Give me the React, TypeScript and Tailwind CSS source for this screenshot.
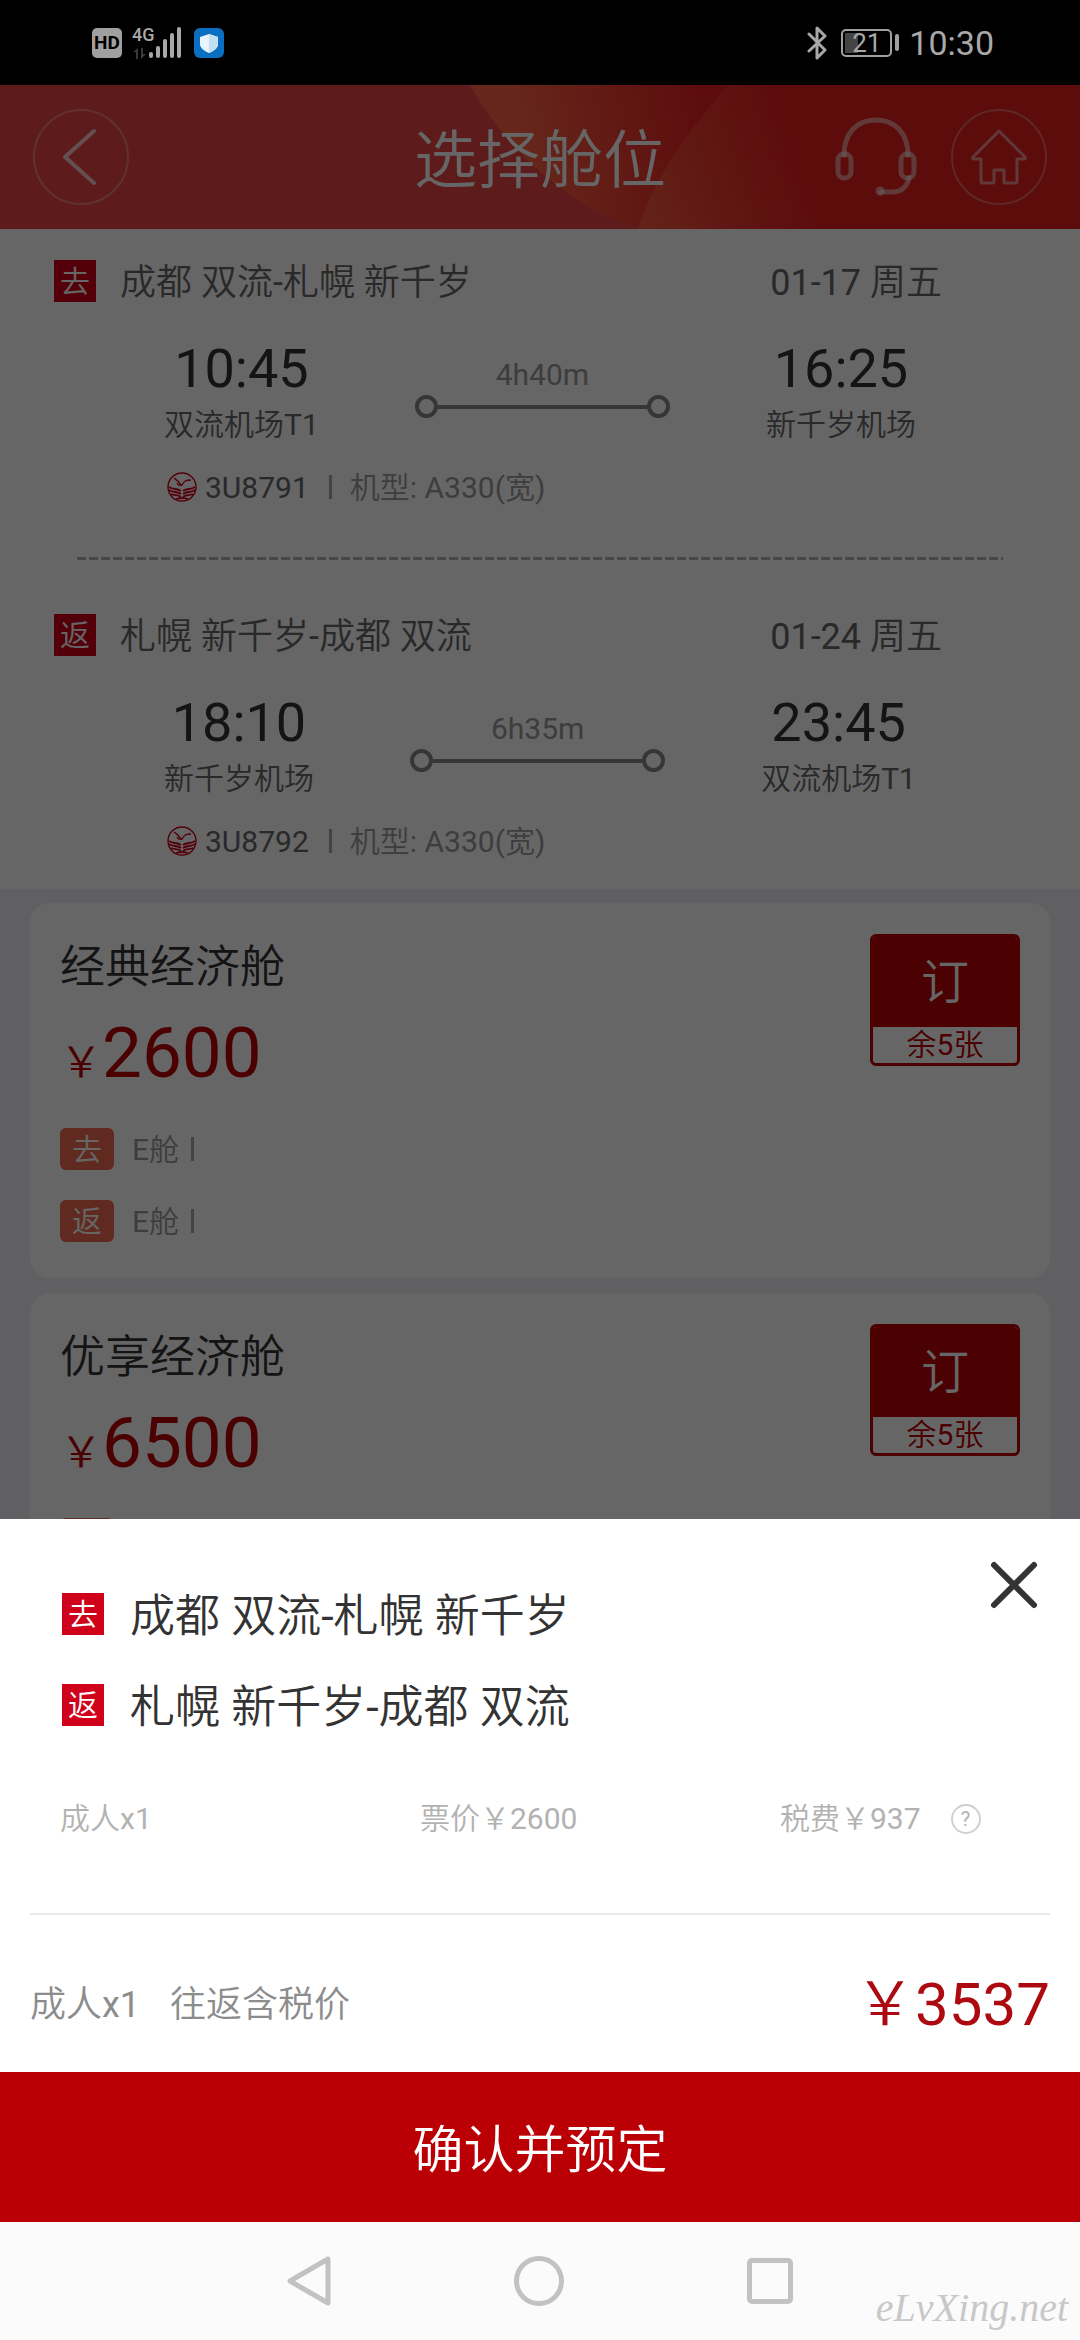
import type { ReactNode } from 'react';

type Leg = {
  tag: string;
  route: string;
  date: string;
  depart: string;
  departAirport: string;
  duration: string;
  arrive: string;
  arriveAirport: string;
  flight: string;
  plane: string;
};

const legs: Leg[] = [
  {
    tag: '去',
    route: '成都 双流-札幌 新千岁',
    date: '01-17 周五',
    depart: '10:45',
    departAirport: '双流机场T1',
    duration: '4h40m',
    arrive: '16:25',
    arriveAirport: '新千岁机场',
    flight: '3U8791',
    plane: 'A330(宽)',
  },
  {
    tag: '返',
    route: '札幌 新千岁-成都 双流',
    date: '01-24 周五',
    depart: '18:10',
    departAirport: '新千岁机场',
    duration: '6h35m',
    arrive: '23:45',
    arriveAirport: '双流机场T1',
    flight: '3U8792',
    plane: 'A330(宽)',
  },
];

const cabins = [
  { name: '经典经济舱', price: 2600, left: 5 },
  { name: '优享经济舱', price: 6500, left: 5 },
];

function StatusBar() {
  return (
    <div className="relative z-20 flex h-[85px] items-center justify-between bg-black pl-[92px] pr-[86px] text-[#a8a8a8]">
      <div className="flex items-center">
        <span className="flex h-[30px] w-[30px] items-center justify-center rounded-[5px] bg-[#a0a0a0] text-[19px] font-bold leading-none text-black">
          HD
        </span>
        <div className="ml-[10px] flex h-[34px] w-5 flex-col justify-between">
          <span className="text-lg font-medium leading-[18px]">4G</span>
          <svg width="15" height="12" viewBox="0 0 15 12" fill="#3a3a3a">
            <path d="M1 4l5-4v11H4V4zM9 0v11l5-5h-3V0z" />
          </svg>
        </div>
        <svg className="-ml-1" width="34" height="32" viewBox="0 0 34 32" fill="#a8a8a8">
          <rect x="1" y="25" width="4" height="6" rx="2" />
          <rect x="8" y="19" width="4" height="12" rx="2" />
          <rect x="15" y="12" width="4" height="19" rx="2" />
          <rect x="22" y="6" width="4" height="25" rx="2" />
          <rect x="29" y="0" width="4" height="31" rx="2" />
        </svg>
        <svg className="ml-3" width="30" height="30" viewBox="0 0 30 30">
          <rect width="30" height="30" rx="6" fill="#0a6fc0" />
          <path d="M15 6l9 3v7c0 4-4 7-9 9-5-2-9-5-9-9V9z" fill="#e8f5fd" />
          <path d="M15 6l9 3v7c0 4-4 7-9 9z" fill="#c3dff2" />
        </svg>
      </div>
      <div className="flex items-center">
        <svg width="20" height="34" viewBox="0 0 20 34" fill="none" stroke="#a8a8a8" strokeWidth="3" strokeLinejoin="round" strokeLinecap="round">
          <path d="M2 8l16 16-8 8V2l8 8L2 25" />
        </svg>
        <span className="relative ml-[14px] flex h-[28px] w-[51px] items-center justify-center rounded-[5px] border-2 border-[#a0a0a0] text-[26px] leading-none">
          <span className="absolute bottom-[2px] left-[2px] top-[2px] w-[13px] bg-[#444]" />
          <span className="relative">21</span>
        </span>
        <span className="ml-[3px] h-[17px] w-[4px] rounded-sm bg-[#a0a0a0]" />
        <span className="ml-[10px] text-[34px] leading-none">10:30</span>
      </div>
    </div>
  );
}

function Header() {
  return (
    <header className="relative h-36 bg-[#eb4444]">
      <svg className="absolute inset-0 h-full w-full" viewBox="0 0 1080 144" preserveAspectRatio="none">
        <defs>
          <linearGradient id="warm" gradientUnits="userSpaceOnUse" x1="520" y1="60" x2="700" y2="20">
            <stop offset="0" stopColor="#ff6244" />
            <stop offset="1" stopColor="#e82022" />
          </linearGradient>
          <linearGradient id="fade" gradientUnits="userSpaceOnUse" x1="630" y1="140" x2="800" y2="80">
            <stop offset="0" stopColor="#f85a42" />
            <stop offset="1" stopColor="#e81e20" />
          </linearGradient>
        </defs>
        <path d="M470 0C505 62 560 116 638 144H1080V0z" fill="url(#warm)" />
        <path d="M728 0C690 45 655 90 638 144H1080V0z" fill="url(#fade)" />
      </svg>
      <div className="relative flex h-full items-center justify-between px-[33px]">
        <button type="button" aria-label="返回" className="flex h-24 w-24 items-center justify-center rounded-full border-2 border-white/30">
          <svg width="36" height="60" viewBox="0 0 36 60" fill="none" stroke="white" strokeOpacity="0.7" strokeWidth="4" strokeLinecap="round" strokeLinejoin="round">
            <path d="M31 4L2 30l29 26" />
          </svg>
        </button>
        <div className="flex items-center gap-[34px]">
          <button type="button" aria-label="客服">
            <svg width="82" height="80" viewBox="0 0 82 80" fill="none" stroke="white" strokeOpacity="0.5" strokeWidth="5" strokeLinecap="round">
              <path d="M9 38C9 16 22 3 41 3s32 13 32 35" />
              <rect x="3" y="37" width="13" height="24" rx="6" />
              <rect x="66" y="37" width="13" height="24" rx="6" />
              <path d="M74 61c-2 9-7 14-17 14H46" />
              <circle cx="45" cy="74" r="2" />
            </svg>
          </button>
          <button type="button" aria-label="首页" className="flex h-24 w-24 items-center justify-center rounded-full border-2 border-white/30">
            <svg width="58" height="58" viewBox="0 0 58 58" fill="none" stroke="white" strokeOpacity="0.5" strokeWidth="3" strokeLinejoin="round">
              <path d="M29 3L3 29q-1 2 1 2h7v22q0 2 2 2h10q1 0 1-1V42h10v12q0 1 1 1h10q2 0 2-2V31h7q2 0 1-2z" />
            </svg>
          </button>
        </div>
      </div>
      <h1 className="pointer-events-none absolute inset-0 flex items-center justify-center pt-2 text-[63px] text-white">选择舱位</h1>
    </header>
  );
}

function Tag({ children }: { children: ReactNode }) {
  return (
    <span className="flex h-[42px] w-[42px] shrink-0 items-center justify-center bg-[#d0021b] pt-0.5 text-[30px] leading-none text-white">
      {children}
    </span>
  );
}

function AirlineLogo() {
  return (
    <svg width="30" height="30" viewBox="0 0 30 30" fill="none" stroke="#d0021b">
      <circle cx="15" cy="15" r="14" strokeWidth="1.4" />
      <path d="M7 6c3 2 5 3 7 7M24 8c-5 0-7 1-9 5-2 1-4 0-5-2" strokeWidth="1.4" />
      <path d="M2 15c4 3 8 1 12 4M2 18c4 3 8 1 12 4M4 22c4 2 7 0 10 3M28 15c-4 3-8 1-12 4M28 18c-4 3-8 1-12 4M26 22c-4 2-7 0-10 3M9 27c3-1 9-1 12 0" strokeWidth="1.8" />
    </svg>
  );
}

function FlightLeg({ leg }: { leg: Leg }) {
  return (
    <section>
      <div className="flex h-[42px] items-center pl-[54px] pr-[138px] text-4xl text-[#666]">
        <Tag>{leg.tag}</Tag>
        <span className="ml-6 flex-1 pt-1">{leg.route}</span>
        <span className="pt-1">{leg.date}</span>
      </div>
      <div className="mt-[35px] flex items-start justify-between px-[164px] text-center text-3xl">
        <div>
          <p className="text-[54px] leading-[64px] text-[#333]">{leg.depart}</p>
          <p className="mt-1 leading-10 text-[#666]">{leg.departAirport}</p>
        </div>
        <div className="w-[255px] pt-[18px]">
          <p className="leading-10 text-[#999]">{leg.duration}</p>
          <div className="flex items-center">
            <span className="h-[23px] w-[23px] rounded-full border-4 border-[#888]" />
            <span className="h-1 flex-1 bg-[#888]" />
            <span className="h-[23px] w-[23px] rounded-full border-4 border-[#888]" />
          </div>
        </div>
        <div>
          <p className="text-[54px] leading-[64px] text-[#333]">{leg.arrive}</p>
          <p className="mt-1 leading-10 text-[#666]">{leg.arriveAirport}</p>
        </div>
      </div>
      <div className="mt-[22px] flex h-10 items-center pl-[167px] text-3xl">
        <AirlineLogo />
        <span className="ml-2 pt-0.5 text-[#666]">{leg.flight}</span>
        <span className="ml-5 h-6 w-[3px] bg-[#aaa]" />
        <span className="ml-[18px] pt-0.5 text-[#999]">机型: {leg.plane}</span>
      </div>
    </section>
  );
}

function CabinCard({ name, price, left }: { name: string; price: number; left: number }) {
  return (
    <article className="flex items-start justify-between rounded-[20px] bg-white px-[30px] pb-9 pt-[31px]">
      <div>
        <h2 className="pt-0.5 text-[45px] leading-[64px] text-[#333]">{name}</h2>
        <p className="mt-[13px] flex items-baseline text-[#bb0005]">
          <span className="text-[42px] leading-none">￥</span>
          <span className="text-[71px] leading-[80px]">{price}</span>
        </p>
        <div className="mt-[35px] flex flex-col gap-[30px]">
          {['去', '返'].map((tag) => (
            <div key={tag} className="flex h-[42px] items-center text-3xl text-[#999]">
              <span className="flex h-full w-[54px] items-center justify-center rounded-md bg-[#f06950] pt-0.5 text-white">{tag}</span>
              <span className="ml-[18px] pt-0.5">E舱</span>
              <span className="ml-3 h-6 w-[3px] bg-[#aaa]" />
            </div>
          ))}
        </div>
      </div>
      <button type="button" className="flex h-[132px] w-[150px] flex-col overflow-hidden rounded-md border-[3px] border-[#bb0005] bg-white">
        <span className="flex w-full flex-1 items-center justify-center bg-[#bb0005] pt-0.5 text-5xl leading-none text-white">订</span>
        <span className="h-9 w-full text-3xl leading-9 text-[#bb0005]">余{left}张</span>
      </button>
    </article>
  );
}

function ConfirmSheet() {
  return (
    <div role="dialog" aria-label="确认并预定" className="bg-white">
      <div className="flex items-start justify-between px-[42px] pt-[42px]">
        <div className="flex flex-col gap-[27px] pl-5 pt-[21px] text-[45px] leading-[64px] text-[#333]">
          {legs.map((leg) => (
            <div key={leg.tag} className="flex h-16 items-center">
              <Tag>{leg.tag}</Tag>
              <span className="ml-[26px] pt-[6px]">{leg.route}</span>
            </div>
          ))}
        </div>
        <button type="button" aria-label="关闭">
          <svg width="48" height="48" viewBox="0 0 48 48" stroke="#333" strokeWidth="6" strokeLinecap="round">
            <path d="M4 4l40 40M44 4L4 44" />
          </svg>
        </button>
      </div>
      <div className="mt-[62px] grid grid-cols-3 text-3xl leading-10 text-[#b2b2b2]">
        <span className="pl-[60px]">成人x1</span>
        <span className="pl-[60px]">票价￥2600</span>
        <span className="flex items-center pl-[60px]">
          税费￥937
          <button type="button" aria-label="税费说明" className="ml-[30px] flex h-[30px] w-[30px] items-center justify-center rounded-full border-2 border-[#d0d0d0] text-xl leading-none">
            ?
          </button>
        </span>
      </div>
      <div className="mx-[30px] mt-[74px] border-t-2 border-[#e8e8e8]" />
      <div className="flex h-[157px] items-center justify-between px-[30px] pt-[22px] text-4xl text-[#8c8c8c]">
        <p>
          成人x1<span className="ml-[30px]">往返含税价</span>
        </p>
        <p className="text-6xl text-[#ac0a10]">￥3537</p>
      </div>
      <button type="button" className="block h-[150px] w-full bg-[#bb0005] pt-2 text-[51px] text-white">
        确认并预定
      </button>
    </div>
  );
}

function SystemNav() {
  return (
    <nav className="relative flex h-[118px] items-center justify-center gap-[183px] bg-[#fbfbfb]">
      <button type="button" aria-label="后退">
        <svg width="44" height="52" viewBox="0 0 44 52" fill="none" stroke="#c2c2c2" strokeWidth="5" strokeLinejoin="round">
          <path d="M41 4L3 26l38 22z" />
        </svg>
      </button>
      <button type="button" aria-label="主屏幕" className="h-[50px] w-[50px] rounded-full border-[5px] border-[#c2c2c2]" />
      <button type="button" aria-label="最近任务" className="h-[46px] w-[46px] rounded-[5px] border-[5px] border-[#c2c2c2]" />
      <span className="absolute bottom-3 right-3 font-['Liberation_Serif',serif] text-[40px] italic leading-none text-[#c8c8c8]">
        eLvXing.net
      </span>
    </nav>
  );
}

export default function App() {
  return (
    <div className="relative h-screen overflow-hidden bg-[#efeff4] font-[Roboto,'Noto_Sans_CJK_SC_DemiLight','Noto_Sans_CJK_SC',sans-serif]">
      <StatusBar />
      <Header />
      <main>
        <div className="bg-white pb-7 pt-[31px]">
          <FlightLeg leg={legs[0]} />
          <div className="mx-[77px] mb-[54px] mt-[50px] h-[3px] bg-[repeating-linear-gradient(90deg,#b0b0b0_0_9px,transparent_9px_12px)]" />
          <FlightLeg leg={legs[1]} />
        </div>
        <div className="flex flex-col gap-[15px] px-[30px] pt-[14px]">
          {cabins.map((cabin) => (
            <CabinCard key={cabin.name} {...cabin} />
          ))}
        </div>
      </main>
      <div className="fixed inset-0 z-10 bg-black/60" />
      <div className="fixed inset-x-0 bottom-0 z-20">
        <ConfirmSheet />
        <SystemNav />
      </div>
    </div>
  );
}
